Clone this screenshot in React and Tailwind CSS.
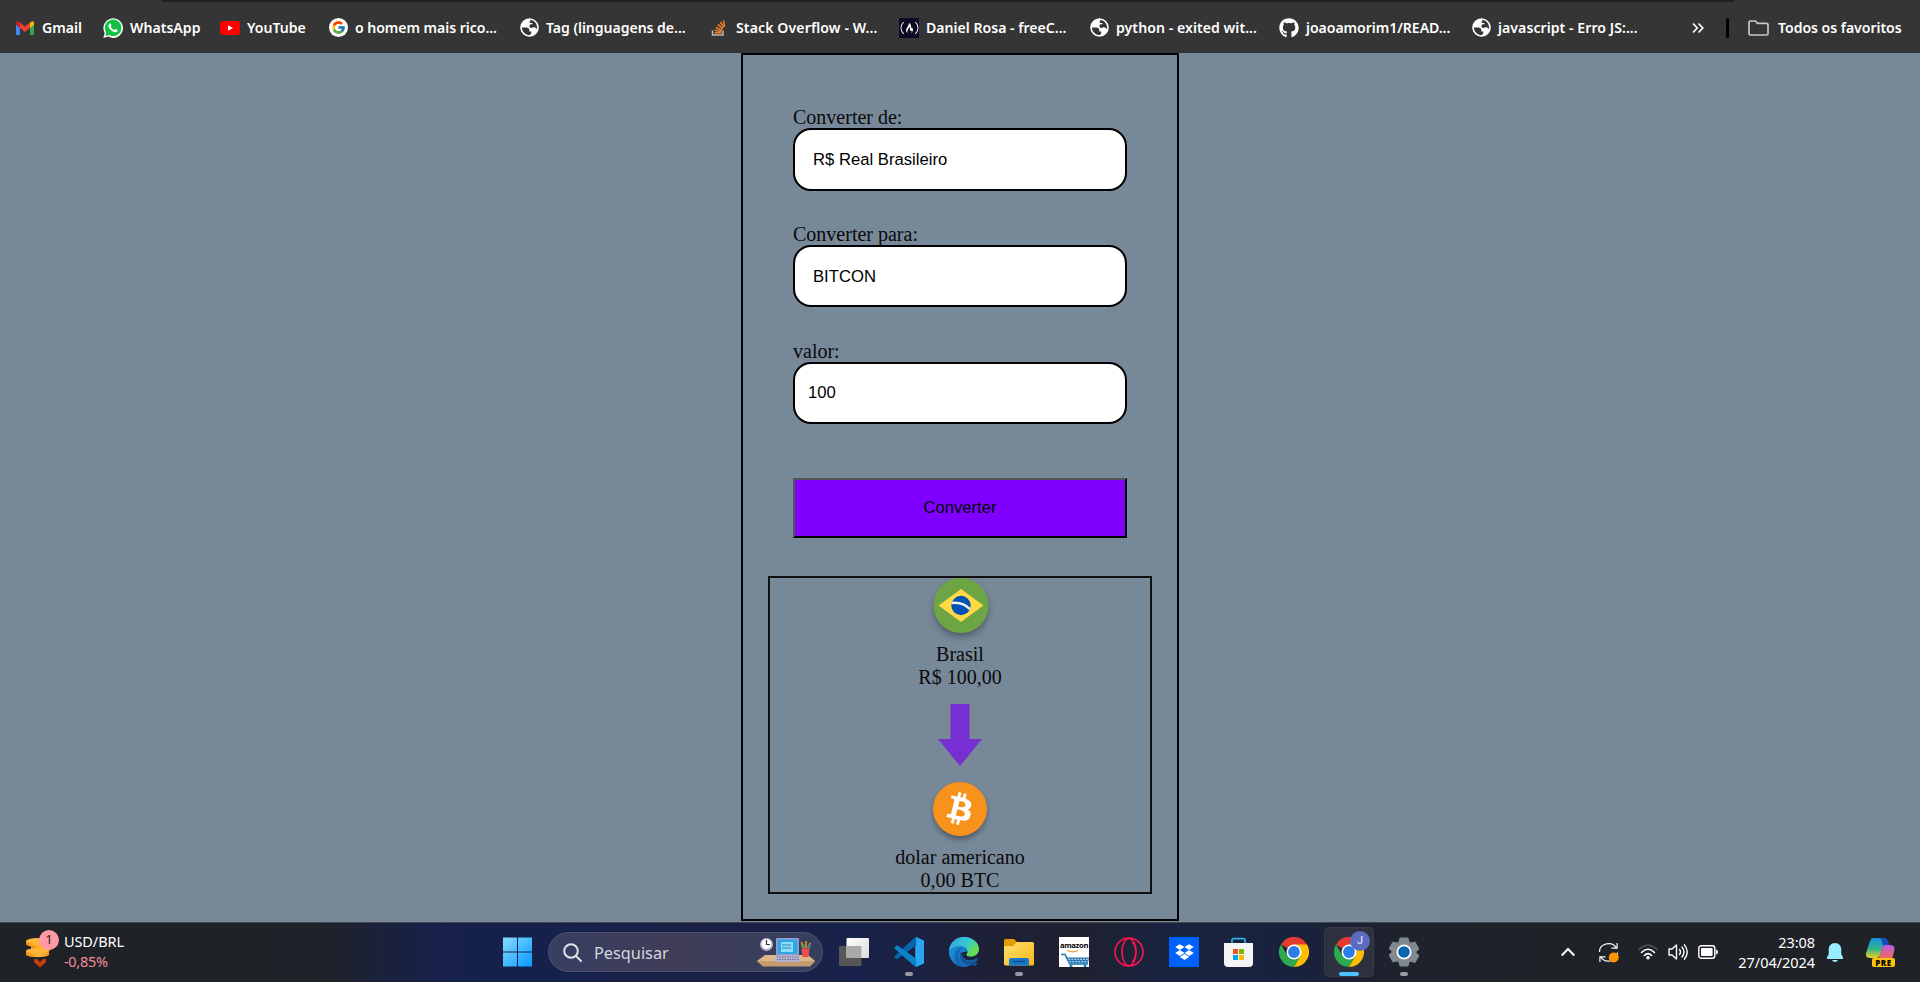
import { FaGithub, FaBitcoin, FaDropbox, FaFreeCodeCamp } from "react-icons/fa";
import { FcGoogle } from "react-icons/fc";

/* ---------- bookmark icons ---------- */

const Gmail = () => (
  <svg className="h-[14px] w-[18px]" viewBox="0 0 18 14">
    <path fill="#4285f4" d="M0 3v10q0 1 1 1h3V6z" />
    <path fill="#34a853" d="M18 3v10q0 1-1 1h-3V6z" />
    <path fill="#fbbc04" d="M14 1.8V7l4-3.2V2c0-2-2-2.7-4-.2z" />
    <path fill="#c5221f" d="M4 1.8V7L0 3.8V2c0-2 2-2.7 4-.2z" />
    <path fill="#ea4335" d="M4 1.6l5 3.9 5-3.9V7l-5 4-5-4z" />
  </svg>
);

const WhatsApp = () => (
  <svg className="h-5 w-5" viewBox="0 0 20 20">
    <path fill="#fff" d="M.3 20l1.400-5A9.800 9.800 0 1 1 5.300 18.600z" />
    <path fill="#12c143" d="M2.200 18l1-3.600A8.300 8.300 0 1 1 6 17z" />
    <path fill="#fff" d="M6.900 5.400c.5-.2.800 0 1 .5l.6 1.500c.1.500-.6 1-.8 1.300.8 1.600 2 2.700 3.600 3.300.4-.3.900-1.200 1.300-1.100l1.700.9c.5.300.3 1 0 1.500-.7 1-2.100 1.100-3.300.6-2.500-.9-4.300-2.600-5.300-4.700-.6-1.500-.1-3.200 1.200-3.800z" />
  </svg>
);

const YouTube = () => (
  <svg className="h-[14px] w-5" viewBox="0 0 20 14">
    <rect width="20" height="14" rx="3" fill="#f00" />
    <path fill="#fff" d="M8 4.200v5.600L13 7z" />
  </svg>
);

const Google = () => (
  <span className="flex h-[19px] w-[19px] items-center justify-center rounded-full bg-white">
    <FcGoogle className="h-[15px] w-[15px]" />
  </span>
);

const Globe = () => (
  <svg className="h-[19px] w-[19px] shrink-0" viewBox="0 0 19 19">
    <circle cx="9.500" cy="9.500" r="9.300" fill="#fff" />
    <path
      fill="#353535"
      d="M10.500 1.900C14.300 2.300 17.100 5.500 17.100 9.500c0 .5 0 1-.1 1.400-1.200-.2-1.500-1.600-2.900-1.600-1.200 0-1.500.7-2.700.7-1.300 0-2-.8-2-2s.8-1.800 2-1.800h1V5.100h-2.600V3.500z"
    />
    <path
      fill="#353535"
      d="M1.900 9.500h4.300c2 0 3.100 1.100 3.100 2.700v1.200h1.900v1.700c0 1-.7 1.300-1.500 2C5.400 17.100 1.900 13.700 1.900 9.500z"
    />
  </svg>
);

const StackOverflow = () => (
  <svg className="h-[18px] w-[16px]" viewBox="0 0 16 18">
    <path d="M1.500 11.500V16h10.500v-4.500" fill="none" stroke="#bcbbbb" strokeWidth="1.500" />
    <path
      d="M3.500 13.700h7M3.700 11.200l6.800 1.200M4.700 8.400l6.300 2.800M6.800 5.400l5.200 4.200M9.300 3l3.600 5.300M12.500 1.500l1.100 6"
      stroke="#f48024"
      strokeWidth="1.500"
    />
  </svg>
);

const FreeCodeCamp = () => (
  <span className="flex h-5 w-5 items-center justify-center bg-[#0a0a23]">
    <FaFreeCodeCamp className="h-[16px] w-[19px] text-white" />
  </span>
);

const Github = () => <FaGithub className="h-5 w-5 text-white" />;

const bookmarks = [
  { Icon: Gmail, label: "Gmail", box: "w-[88px]", text: "" },
  { Icon: WhatsApp, label: "WhatsApp", box: "w-[117px]", text: "" },
  { Icon: YouTube, label: "YouTube", box: "w-[108px]", text: "" },
  { Icon: Google, label: "o homem mais rico...", box: "w-[191px]", text: "tracking-[-0.05px]" },
  { Icon: Globe, label: "Tag (linguagens de...", box: "w-[190px]", text: "tracking-[-0.05px]" },
  { Icon: StackOverflow, label: "Stack Overflow - W...", box: "w-[190px]", text: "tracking-[0.1px]" },
  { Icon: FreeCodeCamp, label: "Daniel Rosa - freeC...", box: "w-[190px]", text: "" },
  { Icon: Globe, label: "python - exited wit...", box: "w-[190px]", text: "tracking-[0.05px]" },
  { Icon: Github, label: "joaoamorim1/READ...", box: "w-[192px]", text: "tracking-[-0.05px]" },
  { Icon: Globe, label: "javascript - Erro JS:...", box: "w-[221px]", text: "tracking-[0.05px]" },
];

function BookmarksBar() {
  return (
    <header className="flex h-[53px] flex-col bg-[#353535] text-[14.100px] font-semibold text-white">
      <div className="ml-[162px] h-[2px] w-[1572px] rounded-b-md bg-[#202127]" />
      <nav className="flex h-[51px] items-center pl-[15px]">
        {bookmarks.map(({ Icon, label, box, text }) => (
          <a key={label} className={`flex h-5 shrink-0 items-center gap-[7px] ${box}`}>
            <span className="flex w-5 shrink-0 items-center justify-center">
              <Icon />
            </span>
            <span className={`whitespace-nowrap ${text}`}>{label}</span>
          </a>
        ))}
        <svg className="h-3 w-3 shrink-0" viewBox="0 0 12 12" fill="none" stroke="#fff" strokeWidth="1.700">
          <path d="M1 1.500L5.300 6 1 10.500M6.500 1.500L10.800 6l-4.300 4.500" />
        </svg>
        <span className="ml-[22px] h-5 w-[3px] shrink-0 rounded-sm bg-black" />
        <svg className="ml-[19px] h-4 w-[21px] shrink-0" viewBox="0 0 21 16" fill="none" stroke="#c7c7c7" strokeWidth="1.700">
          <path d="M1 2.500Q1 1 2.500 1h5l2 2.300h9Q20 3.300 20 4.800v8.700q0 1.500-1.500 1.500h-16Q1 15 1 13.500z" />
        </svg>
        <span className="ml-[9px] tracking-[-0.05px] whitespace-nowrap">Todos os favoritos</span>
      </nav>
    </header>
  );
}

/* ---------- converter ---------- */

const fieldClass =
  "flex w-full items-center rounded-[18px] border-2 border-black bg-white font-['Liberation_Sans',Arial,sans-serif] text-[16.67px] text-black";

const labelClass = "h-[23px] leading-[25px]";

const BrazilFlag = () => (
  <svg className="h-[67px] w-[67px]" viewBox="0 0 67 67">
    <circle cx="34" cy="27.500" r="27.500" fill="#6da544" className="drop-shadow-[0_4px_3px_rgba(0,0,0,0.3)]" />
    <path d="M34 11l22.400 16.500L34 44 11.600 27.500z" fill="#ffda44" />
    <circle cx="34" cy="27.500" r="9.700" fill="#0052b4" />
    <path d="M24.600 25q11-1.700 18.300 6.200" fill="none" stroke="#f0f0f0" strokeWidth="2.600" />
  </svg>
);

const Bitcoin = () => (
  <span className="flex h-[54px] w-[54px] items-center justify-center rounded-full bg-[#f7931a] shadow-[0_4px_5px_rgba(0,0,0,0.3)]">
    <span className="flex h-[46px] w-[46px] items-center justify-center rounded-full bg-white">
      <FaBitcoin className="h-[54px] w-[54px] shrink-0 text-[#f7931a]" />
    </span>
  </span>
);

function Converter() {
  return (
    <main className="flex h-[869px] justify-center bg-[#778899] font-['Liberation_Serif','Times_New_Roman',serif] text-[20px] leading-[23px] text-[#0a0a0a]">
      <section className="flex h-[868px] w-[438px] flex-col items-center border-2 border-black pt-[50px]">
        <form className="flex w-[334px] flex-col">
          <label className={labelClass}>Converter de:</label>
          <div className={`${fieldClass} mb-[31px] h-[63px] pl-[18px]`}>R$ Real Brasileiro</div>
          <label className={labelClass}>Converter para:</label>
          <div className={`${fieldClass} mb-[32px] h-[62px] pl-[18px]`}>BITCON</div>
          <label className={labelClass}>valor:</label>
          <div className={`${fieldClass} h-[62px] pb-[2px] pl-[13px]`}>100</div>
          <button
            type="button"
            className="mt-[54px] h-[60px] border-2 border-t-[#555] border-r-black border-b-black border-l-[#555] bg-[#8000ff] pb-[2px] font-['Liberation_Sans',Arial,sans-serif] text-[16.67px] text-black"
          >
            Converter
          </button>
        </form>
        <div className="mt-[38px] flex h-[318px] w-[384px] flex-col items-center border-2 border-[#101010]">
          <div className="h-[65px]">
            <BrazilFlag />
          </div>
          <p>Brasil</p>
          <p>R$ 100,00</p>
          <svg className="mt-[15px] h-[62px] w-[44px] shrink-0" viewBox="0 0 44 62">
            <path d="M12.500 0h19v35H44L22 62 0 35h12.500z" fill="#772fd3" />
          </svg>
          <div className="mt-[16px] h-[64px]">
            <Bitcoin />
          </div>
          <p>dolar americano</p>
          <p>0,00 BTC</p>
        </div>
      </section>
    </main>
  );
}

/* ---------- taskbar icons ---------- */

const Coins = () => (
  <svg className="h-[31px] w-[34px] shrink-0" viewBox="0 0 34 31">
    <defs>
      <linearGradient id="coin" x1="0" x2="1">
        <stop offset="0" stopColor="#f28c0c" />
        <stop offset=".5" stopColor="#ffb732" />
        <stop offset="1" stopColor="#f39a17" />
      </linearGradient>
    </defs>
    <path d="M0 3v3c0 4 22 4 22 0V3z" fill="url(#coin)" />
    <ellipse cx="11" cy="3" rx="11" ry="3" fill="#ffb63c" />
    <path d="M5 8v3c0 4 20 4 20 0V8z" fill="url(#coin)" />
    <path d="M0 13v3.500c0 3.500 23 3.500 23 0V13z" fill="url(#coin)" />
    <ellipse cx="11.500" cy="13" rx="11.500" ry="2.700" fill="#ffb63c" />
    <path d="M8 21h3l3 3 3-3h3v3l-6 5.500L8 24z" fill="#c83c0c" />
  </svg>
);

const Windows = () => (
  <svg className="h-[30px] w-[30px] shrink-0" viewBox="0 0 30 30">
    <defs>
      <linearGradient id="win" x1="0" y1="0" x2="1" y2="1">
        <stop offset="0" stopColor="#84dcff" />
        <stop offset="1" stopColor="#0899ff" />
      </linearGradient>
    </defs>
    <path fill="url(#win)" d="M0 .5h14v14H0zM15 .5h14v14H15zM0 15.500h14v14H0zM15 15.500h14v14H15z" />
  </svg>
);

const Desk = () => (
  <svg className="h-[30px] w-[58px] shrink-0" viewBox="0 0 58 30">
    <path d="M8 18h43l7 6-5 5H6l-6-5z" fill="#dcb78c" />
    <path d="M0 24h58l-5 5.500H6z" fill="#c49b6d" />
    <circle cx="9.500" cy="7.500" r="6.500" fill="#b9aed0" />
    <circle cx="9.500" cy="7" r="5" fill="#fff" />
    <path d="M9.500 3v4.500H13" fill="none" stroke="#333" strokeWidth="1.200" />
    <rect x="19" y="1" width="23" height="17" rx="1" fill="#9c9ac8" />
    <rect x="20.500" y="2.500" width="20" height="14.500" fill="#2da7e4" />
    <rect x="24" y="5" width="12" height="10" fill="#8bdcfa" />
    <path d="M25 8h9M25 11h9" stroke="#2a80bd" />
    <path d="M19 18h23l1.500 7h-26z" fill="#b4b1ce" />
    <path d="M20 20h21M20 22.500h22" stroke="#71709c" strokeDasharray="1.500 1" />
    <path d="M46 11l-1.500-6M49 11V4M51 11l2.500-5" stroke="#cc812b" strokeWidth="2" />
    <path d="M47 11l-1-4" stroke="#38a85c" strokeWidth="2" />
    <path d="M52 11l1.500-4" stroke="#367bb5" strokeWidth="2" />
    <path d="M44.500 11.500h8l-1 8.500h-6z" fill="#ec4e50" />
  </svg>
);

const TaskView = () => (
  <svg className="h-[30px] w-[30px]" viewBox="0 0 30 30">
    <defs>
      <linearGradient id="tv" x1="0" y1="0" x2="1" y2="1">
        <stop offset="0" stopColor="#fff" />
        <stop offset="1" stopColor="#dcdcdc" />
      </linearGradient>
    </defs>
    <rect y="9" width="22.500" height="20" rx="1" fill="#555655" />
    <rect x="7.500" y="1" width="22.500" height="20" rx="1" fill="url(#tv)" />
    <path d="M7.500 9h15v12h-15z" fill="#a9a9a9" />
  </svg>
);

const VsCode = () => (
  <svg className="h-[30px] w-[30px]" viewBox="0 0 30 30">
    <path d="M22.200 0L30 3.500v23L22.200 30l-1-7V7z" fill="#2aa5f1" />
    <path d="M.5 19.300L20.500.7 22.200 0v8.300L3.200 22.300.6 21z" fill="#0766ab" />
    <path d="M.5 10.200l2.700-2 19 13.500V30l-1.700-.8L.5 11.500z" fill="#0a83cb" />
  </svg>
);

const Edge = () => (
  <svg className="h-[30px] w-[30px]" viewBox="0 0 30 30">
    <defs>
      <linearGradient id="edgeTop" x1="0" y1=".2" x2="1" y2=".7">
        <stop offset="0" stopColor="#2fa9e6" />
        <stop offset=".5" stopColor="#36c7d2" />
        <stop offset="1" stopColor="#67e04b" />
      </linearGradient>
      <linearGradient id="edgeBody" x1="0" y1="0" x2="1" y2="1">
        <stop offset="0" stopColor="#1b9de2" />
        <stop offset="1" stopColor="#0f5fae" />
      </linearGradient>
    </defs>
    <circle cx="15" cy="15" r="15" fill="url(#edgeBody)" />
    <path d="M0 14C1 5 7 0 15 0c9 0 15 6 15 12 0 5-4 7.500-8.500 7.500-3 0-4.500-1-3.800-2.200 2-3 .3-7.800-5.700-8.300C7 8.500 2 10.500 0 14z" fill="url(#edgeTop)" />
    <path d="M10.500 15.500c-3 6 3 13.500 10 13-7 3.500-14.500-.5-15-8C5.200 14.500 9 10.500 14 10c-1.500 1-3 3-3.500 5.500z" fill="#1666b8" />
    <path d="M12 14.500c-1.500 6 4 10.500 10.500 10 2.500-.2 4.500-1.300 7-2.500l1.500 3-5 4-4-1.500c-8 .5-13.500-7-10-13z" fill="#15508f" />
    <path d="M12.300 15.500C12 21 18 24.500 24 23c2-.5 3.500-1.500 4.300-1.800.7-.2 1.100.3.700 1-.7 1.300-1.700 2.500-2.800 3.600L31 27V13l-1.200.3c-.8 4-4.300 6.200-8.300 6.200-3 0-4.500-1-3.800-2.200.5-.8.8-1.800.7-2.800z" fill="#1d2240" />
    <path d="M29.900 11.500C30 17 26 19.500 21.500 19.500c-3 0-4.500-1-3.800-2.200L25 9z" fill="#62dc58" />
  </svg>
);

const Folder = () => (
  <svg className="h-[30px] w-[30px]" viewBox="0 0 30 30">
    <defs>
      <linearGradient id="fold" x1="0" y1="0" x2="1" y2="1">
        <stop offset="0" stopColor="#ffdf70" />
        <stop offset="1" stopColor="#f9b916" />
      </linearGradient>
    </defs>
    <path d="M0 3.500Q0 2 1.500 2H10l3 3v5H0z" fill="#e39b02" />
    <path d="M0 9h9l4-4h15.500Q30 5 30 6.500V27q0 1.500-1.500 1.500h-27Q0 28.500 0 27z" fill="url(#fold)" />
    <path d="M5 28.500V23q0-2 2-2h16q2 0 2 2v5.500z" fill="#1479cb" />
    <path d="M9 24.500h12" stroke="#0c4c8a" strokeWidth="1.500" />
  </svg>
);

const Amazon = () => (
  <div className="flex h-[30px] w-[30px] flex-col items-center bg-white">
    <span className="mt-[3px] h-[10px] font-['Open_Sans',sans-serif] text-[7.600px] leading-[10px] font-bold tracking-[-0.300px] text-black">amazon</span>
    <svg className="h-[17px] w-[30px]" viewBox="0 0 30 17">
      <path d="M8 .3q6 3 11-.1" stroke="#f29b2e" fill="none" strokeWidth="1.200" />
      <path d="M2 4.500h4l4.500 9M10 14h19" stroke="#2479b5" fill="none" strokeWidth="1.600" />
      <path d="M8 7.500h22l-1 6H10.500z" fill="#2479b5" />
      <path d="M9.500 9.300H29M10.500 11.700h19" stroke="#fff" strokeWidth="1.200" strokeDasharray="1.200 1.800" />
      <circle cx="12" cy="15.800" r="1.500" fill="#2479b5" />
      <circle cx="26" cy="15.800" r="1.500" fill="#2479b5" />
    </svg>
  </div>
);

const OperaGx = () => (
  <svg className="h-[30px] w-[30px]" viewBox="0 0 30 30" fill="none" stroke="#f5174f">
    <circle cx="15" cy="15" r="14" strokeWidth="1.600" />
    <ellipse cx="15" cy="15" rx="7" ry="13.500" strokeWidth="1.600" />
    <path d="M18 5c5 4 5 16 0 20" strokeWidth="1.500" />
  </svg>
);

const Dropbox = () => (
  <span className="flex h-[30px] w-[30px] items-center justify-center bg-[#0061ff]">
    <FaDropbox className="h-[18px] w-[19px] text-white" />
  </span>
);

const Store = () => (
  <svg className="h-[30px] w-[30px]" viewBox="0 0 30 30">
    <path d="M8 7V3q0-1.300 1.300-1.300h10.400Q21 1.700 21 3v4" fill="none" stroke="#28b2e8" strokeWidth="1.700" />
    <path d="M0 6h29v20q0 4-4 4H4q-4 0-4-4z" fill="#f4f4f4" />
    <path d="M9 12h5v5H9z" fill="#f25022" />
    <path d="M15 12h5v5h-5z" fill="#7fba00" />
    <path d="M9 18h5v5H9z" fill="#00a4ef" />
    <path d="M15 18h5v5h-5z" fill="#ffb900" />
  </svg>
);

const Chrome = () => (
  <svg className="h-[30px] w-[30px]" viewBox="0 0 30 30">
    <path d="M15 15L2 7.500a15 15 0 0 1 26 0z" fill="#e33b2e" />
    <path d="M15 15h0l-6.500 3.700L2 7.500A15 15 0 0 0 15 30l6.500-11.300z" fill="#2da94f" />
    <path d="M15 7.500h13A15 15 0 0 1 15 30l6.500-11.300z" fill="#fdbd00" />
    <circle cx="15" cy="15" r="7.500" fill="#fff" />
    <circle cx="15" cy="15" r="5.900" fill="#2b7de9" />
  </svg>
);

const Settings = () => (
  <svg className="h-[30px] w-[30px]" viewBox="0 0 30 30">
    <path
      d="M11 1h8l1 4 2 1.200L26 5l4 7-3 2.500v1.500l3 2.500-4 7-4-1.200L20 25l-1 4h-8l-1-4-2-1.200L4 25l-4-7 3-2.500V14L0 11.500 4 5l4 1.200L10 5z"
      fill="#818991"
      stroke="#818991"
      strokeLinejoin="round"
    />
    <circle cx="15" cy="15" r="7.500" fill="#fff" />
    <circle cx="15" cy="15" r="5.800" fill="#0a63ad" />
  </svg>
);

const apps = [
  { name: "view", Icon: TaskView },
  { name: "code", Icon: VsCode, running: true },
  { name: "edge", Icon: Edge },
  { name: "files", Icon: Folder, running: true },
  { name: "amazon", Icon: Amazon },
  { name: "opera", Icon: OperaGx },
  { name: "dropbox", Icon: Dropbox },
  { name: "store", Icon: Store },
  { name: "chrome", Icon: Chrome },
  { name: "profile", Icon: Chrome, active: true },
  { name: "settings", Icon: Settings, running: true },
];

function AppButton({ Icon, running, active }) {
  return (
    <div className={`relative flex h-[50px] w-[50px] shrink-0 flex-col items-center rounded-[5px] pt-[10px] ${active ? "bg-[#2d303e] ring-1 ring-[#383b48] ring-inset" : ""}`}>
      <Icon />
      {active && (
        <span className="absolute top-1 right-1 flex h-5 w-5 items-center justify-center rounded-full bg-[#5c6bc0] font-['Roboto',sans-serif] text-[11px] font-medium text-[#d5d9ef]">J</span>
      )}
      {active && <span className="mt-[5px] h-1 w-5 rounded-full bg-[#4cc2ff]" />}
      {running && <span className="mt-[5px] h-1 w-2 rounded-full bg-[#9a99a5]" />}
    </div>
  );
}

const Sync = () => (
  <svg className="h-[21px] w-[21px] shrink-0" viewBox="0 0 22 22" fill="none" stroke="#f4f4f4" strokeWidth="1.300">
    <path d="M1.500 10.500C1.500 1 15 -1.500 19.500 6.500M20 1v5.500h-6M20.500 11c0 9.500-13 12.500-18 4M2 21v-5.500h6" />
    <circle cx="16.500" cy="16.300" r="5.200" fill="#ff9500" stroke="none" />
  </svg>
);

const Wifi = () => (
  <svg className="h-[16px] w-[20px] shrink-0" viewBox="0 0 20 16" fill="none" strokeLinecap="round" strokeWidth="1.600">
    <path d="M1 5.500q9-8.500 18 0" stroke="#555" />
    <path d="M3.500 8.500q6.500-6.500 13 0M6.300 11.500q3.700-3.600 7.400 0" stroke="#fff" />
    <circle cx="10" cy="13.700" r="1.800" fill="#fff" />
  </svg>
);

const Volume = () => (
  <svg className="h-[18px] w-[20px] shrink-0" viewBox="0 0 20 18" fill="none" stroke="#fff" strokeWidth="1.400" strokeLinecap="round" strokeLinejoin="round">
    <path d="M1 6h3l4.500-4v14L4 12H1zM11.500 6.500q2 2.500 0 5M14 4q4 5 0 10M16.500 1.800q5.500 7.200 0 14.400" />
  </svg>
);

const Battery = () => (
  <svg className="h-[14px] w-[20px] shrink-0" viewBox="0 0 20 14">
    <rect x=".8" y=".8" width="16" height="12.400" rx="2.500" fill="none" stroke="#fff" strokeWidth="1.400" />
    <rect x="3" y="3" width="11.600" height="8" rx="1" fill="#fff" />
    <path d="M18 4.500q2 .5 2 2.500t-2 2.500z" fill="#fff" />
  </svg>
);

const Bell = () => (
  <svg className="h-[19px] w-[16px] shrink-0" viewBox="0 0 16 19" fill="#99ebff">
    <path d="M8 0c4 0 6.300 3 6.300 6.500V11L16 14.500V16H0v-1.500L1.700 11V6.500C1.700 3 4 0 8 0zM5 17h6q-.8 2-3 2t-3-2z" />
  </svg>
);

const Copilot = () => (
  <div className="relative h-[29px] w-[29px] shrink-0">
    <svg className="h-[29px] w-[29px]" viewBox="0 0 29 29">
      <defs>
        <linearGradient id="cpA" x1="0" y1="0" x2="0" y2="1">
          <stop offset="0" stopColor="#1b8fe0" />
          <stop offset=".55" stopColor="#35b487" />
          <stop offset="1" stopColor="#f0d020" />
        </linearGradient>
        <linearGradient id="cpB" x1="0" y1="0" x2="0" y2="1">
          <stop offset="0" stopColor="#b85be8" />
          <stop offset="1" stopColor="#f4694f" />
        </linearGradient>
      </defs>
      <path d="M8 0h9q4 0 5 4l1 4h-6l-3 9q-1 3-4 3H4q-5 0-4-5L4 3q1-3 4-3z" fill="url(#cpA)" />
      <path d="M14 0h3q4 0 5 4l1 4h-6q-1-7-3-8z" fill="#174cbc" />
      <path d="M19 7h5q5 0 4.500 5L26 21H11q2-1 3-4l2-7q1-3 3-3z" fill="url(#cpB)" />
    </svg>
    <span className="absolute right-0 bottom-0 flex h-[9px] w-[23px] items-center justify-center rounded-[2px] bg-[#fec40b] font-['Open_Sans',sans-serif] text-[8px] leading-[9px] font-extrabold tracking-[0.5px] text-black">PRE</span>
  </div>
);

function Taskbar() {
  return (
    <footer className="flex h-[60px] items-start border-t border-[#42464f] bg-[linear-gradient(90deg,#1f2226_0px,#1f2228_320px,#172149_430px,#15214b_540px,#1c2045_700px,#18224a_860px,#1e2038_980px,#1f2130_1080px,#1a2340_1170px,#18223f_1280px,#1f222b_1400px,#1f2229_1500px,#1f2226_1600px)] text-white">
      <div className="flex h-[59px] w-[503px] shrink-0 items-start pt-[8px] pl-[26px]">
        <div className="relative mt-[7px] w-[38px]">
          <Coins />
          <span className="absolute -top-[8px] left-[13px] flex h-5 w-5 items-center justify-center rounded-full bg-[#ff99a4] text-[13px] text-[#1f1f1f]">1</span>
        </div>
        <div className="text-[14.500px] leading-5">
          <p className="tracking-[-0.100px]">USD/BRL</p>
          <p className="tracking-[-0.300px] text-[#f48c97]">-0,85%</p>
        </div>
      </div>
      <div className="mt-[14px]">
        <Windows />
      </div>
      <div className="mt-[9px] ml-[15px] flex h-10 w-[275px] shrink-0 items-center rounded-full border border-[#4b5070] bg-[linear-gradient(90deg,#373e60,#403d58_45%,#34405f)] pr-[7px] pl-[14px]">
        <svg className="h-[19px] w-[19px] shrink-0" viewBox="0 0 19 19" fill="none" stroke="#e3e3ea" strokeWidth="2" strokeLinecap="round">
          <circle cx="8" cy="8" r="6.800" />
          <path d="M13 13l5 5" />
        </svg>
        <span className="ml-[12px] flex-1 pt-[2px] text-[16.300px] text-[#d5d6de]">Pesquisar</span>
        <Desk />
      </div>
      <div className="mt-1 ml-[6px] flex gap-[5px]">
        {apps.map((app) => (
          <AppButton key={app.name} {...app} />
        ))}
      </div>
      <div className="flex h-[58px] flex-1 items-center">
        <svg className="ml-[132px] h-[10px] w-[14px] shrink-0" viewBox="0 0 14 10" fill="none" stroke="#fff" strokeWidth="2">
          <path d="M.7 8.500L7 2l6.300 6.500" />
        </svg>
        <div className="ml-[23px]">
          <Sync />
        </div>
        <div className="ml-[19px] flex items-center gap-[10px]">
          <Wifi />
          <Volume />
          <Battery />
        </div>
        <div className="w-[97px] text-right text-[14.500px] leading-5 tracking-[-0.050px] whitespace-nowrap">
          <p>23:08</p>
          <p>27/04/2024</p>
        </div>
        <div className="ml-[12px]">
          <Bell />
        </div>
        <div className="ml-[23px]">
          <Copilot />
        </div>
      </div>
    </footer>
  );
}

export default function App() {
  return (
    <div className="flex h-[982px] w-[1920px] flex-col overflow-hidden bg-[#778899] font-['Segoe_UI','Noto_Sans',sans-serif]">
      <BookmarksBar />
      <Converter />
      <Taskbar />
    </div>
  );
}
